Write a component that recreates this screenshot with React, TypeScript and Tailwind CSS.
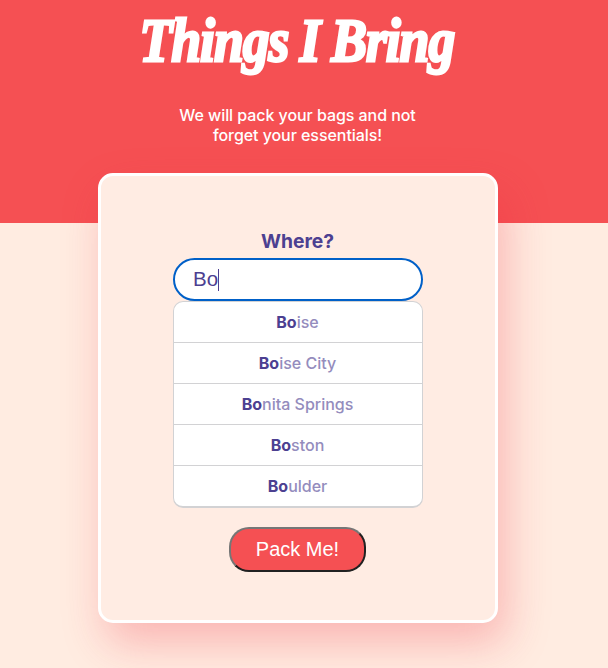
const cities = ['ise', 'ise City', 'nita Springs', 'ston', 'ulder'];

export default function App() {
  return (
    <div className="h-[668px] w-[608px] overflow-hidden bg-[linear-gradient(#f55053_223px,#ffece1_223px)] pr-3 font-['Inter',sans-serif] text-[#4c4091]">
      <header className="h-[173px] text-center text-white">
        <h1 className="flex h-[105px] justify-center pt-[2px] pr-[3px] font-['Liberation_Serif',serif] text-[62px] leading-[76px] font-bold italic whitespace-nowrap">
          <span className="block origin-center scale-x-[0.865] tracking-[-1.2px] word-spacing [word-spacing:-1px] [-webkit-text-stroke:2.8px_white]">Things I Bring</span>
        </h1>
        <p className="-ml-px text-base leading-5 font-[450] tracking-[-0.06px]">
          We will pack your bags and not
          <br />
          forget your essentials!
        </p>
      </header>
      <main className="mx-auto flex h-[450px] w-[400px] flex-col items-center rounded-[15px] border-[3px] border-white bg-[#ffece3] pt-[54px] shadow-[8px_20px_44px_rgba(238,38,60,0.28)]">
        <label className="-ml-px text-[19.3px] leading-[22px] font-bold">Where?</label>
        <div className="mt-[6px] flex h-[43px] w-[250px] items-center rounded-[21.5px] border-2 border-[#0060c8] bg-white pl-[18px] font-['Liberation_Sans',sans-serif] text-[20.5px]">
          <span>Bo</span>
          <span className="h-[22px] w-px bg-[#4c4091]" />
        </div>
        <ul className="h-[207px] w-[250px] overflow-hidden rounded-[10px] border border-b-2 border-[#d2d2d4] bg-white text-center text-base">
          {cities.map((city) => (
            <li key={city} className="h-[41px] border-b border-[#d2d2d4] pr-px leading-[41px] font-medium text-[#948cbd] last:border-b-0">
              <b className="font-bold text-[#4c4091]">Bo</b>{city}
            </li>
          ))}
        </ul>
        <button className="mt-[19px] mr-px h-[45px] w-[137px] rounded-[20px] border-2 border-t-[#767676] border-r-[#212121] border-b-[#212121] border-l-[#767676] bg-[#f55053] pb-[2px] font-['Liberation_Sans',sans-serif] text-[20px] text-white">
          Pack Me!
        </button>
      </main>
    </div>
  );
}
